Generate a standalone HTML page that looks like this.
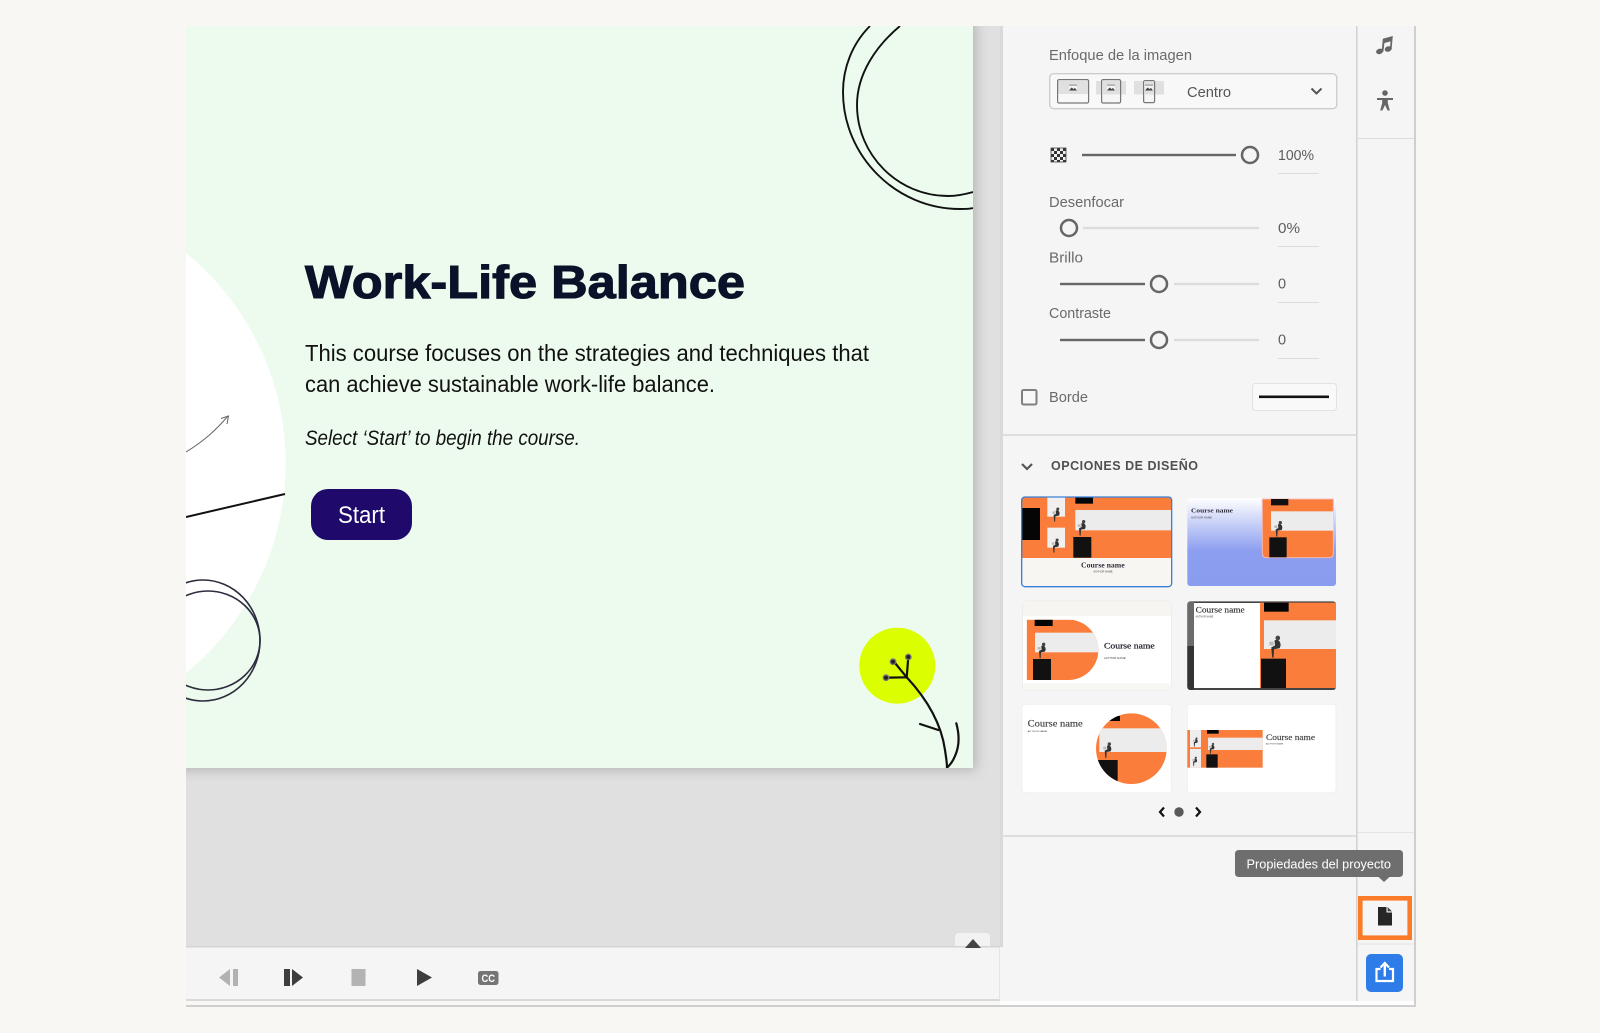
<!DOCTYPE html>
<html lang="es">
<head>
<meta charset="utf-8">
<title>Work-Life Balance</title>
<style>
html,body{margin:0;padding:0;background:#f8f7f3;width:1600px;height:1033px;overflow:hidden}
svg{display:block}
text{font-family:"Liberation Sans",sans-serif}
.l{font-size:15px;fill:#6a6a6a}
.v{font-size:14.5px;fill:#5c5c5c}
.s{font-family:"Liberation Serif",serif;font-weight:bold;fill:#2c2c3a}
.a{font-size:5px;fill:#444}
</style>
</head>
<body>
<svg width="1600" height="1033" viewBox="0 0 1600 1033" xmlns="http://www.w3.org/2000/svg">
<defs>
<clipPath id="slide"><rect x="186" y="26" width="787" height="742"/></clipPath>
<clipPath id="stage"><rect x="186" y="26" width="814" height="921"/></clipPath>
<filter id="blur" x="-10%" y="-10%" width="120%" height="120%"><feGaussianBlur stdDeviation="6"/></filter>
<linearGradient id="g2" x1="0" x2="0" y1="0" y2="1"><stop offset="0" stop-color="#ffffff"/><stop offset=".6" stop-color="#8c9ef0"/><stop offset="1" stop-color="#8a9cee"/></linearGradient>
<pattern id="chk" width="6" height="6" patternUnits="userSpaceOnUse" x="1051" y="148"><rect width="6" height="6" fill="#f0f0f0"/><rect width="3" height="3" fill="#333"/><rect x="3" y="3" width="3" height="3" fill="#333"/></pattern>
<clipPath id="t3c"><path d="M50 389H175C225 389 265 430 265 480C265 530 225 570 175 570H50Z"/></clipPath>
<clipPath id="t5c"><circle cx="364" cy="176" r="106"/></clipPath>
<g id="p"><circle cx="6" cy="-20" r="5" fill="#444"/><path d="M-1 -15C6 -18 12 -14 12 -4L10 2L-2 4L-3 22H-6L-8 0L0 -4Z" fill="#333"/><rect x="-12" y="-12" width="9" height="8" fill="#bbb"/></g>
<g id="img"><rect x="-4" y="-3.5" width="8" height="6" fill="#f4f4f4"/><path d="M-4 2.5L-1.5 -.5L.5 1L2 0L4 2.5Z" fill="#444"/><rect x="-4" y="-3.5" width="8" height="1.2" fill="#999"/></g>
</defs>

<!-- page frame -->
<rect x="186" y="26" width="1228" height="975" fill="#f5f5f5"/>
<rect x="186" y="1001" width="814" height="4" fill="#f8f7f3"/>
<rect x="1000" y="1001" width="414" height="4" fill="#fff"/>
<rect x="186" y="1005" width="1229" height="2" fill="#cfcfcf"/>
<rect x="1414" y="26" width="2" height="981" fill="#cfcfcf"/>

<!-- stage -->
<rect x="186" y="26" width="814" height="921" fill="#e0e0e0"/>
<g clip-path="url(#stage)"><rect x="176" y="20" width="800" height="750" fill="#b4b4b4" filter="url(#blur)"/></g>
<rect x="1000" y="26" width="3" height="921" fill="#d9d9d9"/>

<!-- slide -->
<rect x="186" y="26" width="787" height="742" fill="#edfbee"/>
<g clip-path="url(#slide)">
<circle cx="14.7" cy="463" r="271" fill="#fff"/>
<path d="M870 26C852 44 843 68 843 92C843 156 896 209 960 209C965 209 970 209 973 208" fill="none" stroke="#111" stroke-width="1.9"/>
<path d="M900 26C876 46 857 74 857 105C857 155 898 196 948 196C957 196 966 194 973 192" fill="none" stroke="#111" stroke-width="1.9"/>
<path d="M186 452C204 441 216 430 228 416" fill="none" stroke="#666" stroke-width="1"/>
<path d="M221 418.5L228.5 416L227 424" fill="none" stroke="#666" stroke-width="1"/>
<path d="M186 517L285 494" fill="none" stroke="#111" stroke-width="2"/>
<ellipse cx="203" cy="640.5" rx="57" ry="60.5" fill="none" stroke="#2c2c3e" stroke-width="1.6"/>
<ellipse cx="208" cy="640.5" rx="52" ry="49.5" fill="none" stroke="#2c2c3e" stroke-width="1.6"/>
<circle cx="897.3" cy="665.7" r="38" fill="#dcff00"/>
<g fill="none" stroke="#111" stroke-width="2.2" stroke-linecap="round">
<path d="M895 663L906.7 677.3C925 697 941 722 945 750C946 757 947 762 947 767.7"/>
<path d="M908.3 657L906.7 677.3"/>
<path d="M886 677.7L906.7 677.3"/>
<path d="M920 724L938.3 730"/>
<path d="M956.3 723.3C959 733 960 745 955 756C953 761 950 765 947 767.7"/>
</g>
<g fill="#222" stroke="#777" stroke-width="1.4">
<circle cx="893" cy="661.7" r="2.7"/><circle cx="908.3" cy="657" r="2.7"/><circle cx="886" cy="677.7" r="2.7"/>
</g>
</g>
<text x="305" y="298" font-size="46" font-weight="bold" fill="#0a1128" stroke="#0a1128" stroke-width="1.1" textLength="440" lengthAdjust="spacingAndGlyphs">Work-Life Balance</text>
<text x="305" y="361" font-size="23" fill="#111" textLength="564" lengthAdjust="spacingAndGlyphs">This course focuses on the strategies and techniques that</text>
<text x="305" y="392" font-size="23" fill="#111" textLength="410" lengthAdjust="spacingAndGlyphs">can achieve sustainable work-life balance.</text>
<text x="305" y="445" font-size="21" font-style="italic" fill="#111" textLength="275" lengthAdjust="spacingAndGlyphs">Select ‘Start’ to begin the course.</text>
<rect x="311" y="489" width="101" height="51" rx="17" fill="#1f0a6c"/>
<text x="338" y="523" font-size="24" fill="#fff" textLength="47" lengthAdjust="spacingAndGlyphs">Start</text>

<!-- control bar -->
<path d="M955 947V937Q955 933 959 933H986Q990 933 990 937V947Z" fill="#f2f2f2"/>
<rect x="186" y="947" width="813" height="52" fill="#f5f5f5"/>
<rect x="186" y="946" width="814" height="1.5" fill="#d4d4d4"/>
<rect x="186" y="999" width="814" height="2" fill="#d9d9d9"/>
<rect x="999" y="947" width="1" height="53" fill="#e4e4e4"/>
<path d="M965 948L973 939L981 948Z" fill="#444"/>
<path d="M230 969V986L219 977.5Z" fill="#b2b2b2"/><rect x="233" y="969" width="5" height="17" fill="#b2b2b2"/>
<rect x="284" y="969" width="6" height="17" fill="#3e3e3e"/><path d="M292 969L303 977.5L292 986Z" fill="#3e3e3e"/>
<rect x="351.5" y="969" width="14" height="17" fill="#b3b3b3"/>
<path d="M417 969L432 977.5L417 986Z" fill="#3e3e3e"/>
<rect x="478" y="971" width="20.5" height="14" rx="2.5" fill="#757575"/>
<text x="481.5" y="982" font-size="11" font-weight="bold" fill="#fff" textLength="13.5" lengthAdjust="spacingAndGlyphs">CC</text>

<!-- panel -->
<rect x="1003" y="26" width="354" height="975" fill="#f5f5f5"/>
<rect x="1356" y="26" width="1.6" height="975" fill="#d2d2d2"/>
<text class="l" x="1049" y="60" textLength="143" lengthAdjust="spacingAndGlyphs">Enfoque de la imagen</text>
<rect x="1049.7" y="73.7" width="287" height="35" rx="4" fill="#f8f8f8" stroke="#cdcdcd" stroke-width="1.4"/>
<rect x="1057" y="81" width="32" height="13" fill="#e0e0e0"/>
<rect x="1057.6" y="79.6" width="31" height="23.4" rx="1.5" fill="none" stroke="#777" stroke-width="1.2"/>
<use href="#img" x="1073" y="88"/>
<rect x="1096" y="81" width="30" height="13.5" fill="#e0e0e0"/>
<rect x="1101.6" y="79.6" width="19" height="23.4" rx="1.5" fill="#f6f6f6" stroke="#777" stroke-width="1.2"/>
<rect x="1102.2" y="81" width="17.8" height="13.5" fill="#e0e0e0"/>
<use href="#img" x="1111" y="88"/>
<rect x="1134" y="81" width="30" height="13.5" fill="#e0e0e0"/>
<rect x="1143.6" y="80.6" width="11" height="22" rx="1.5" fill="#f6f6f6" stroke="#777" stroke-width="1.2"/>
<rect x="1144.2" y="81.2" width="9.8" height="13.3" fill="#e0e0e0"/>
<use href="#img" x="1149" y="88"/>
<text x="1187" y="97" font-size="15" fill="#555" textLength="44" lengthAdjust="spacingAndGlyphs">Centro</text>
<path d="M1311.5 88.5L1316.5 93.5L1321.5 88.5" fill="none" stroke="#555" stroke-width="2"/>

<rect x="1051" y="148" width="15" height="14" fill="url(#chk)" stroke="#444" stroke-width=".8"/>
<rect x="1082" y="153.8" width="154" height="2.4" fill="#666"/>
<circle cx="1250" cy="155" r="8" fill="#f5f5f5" stroke="#666" stroke-width="2.5"/>
<text class="v" x="1278" y="160" textLength="36" lengthAdjust="spacingAndGlyphs">100%</text>
<rect x="1278" y="173" width="41" height="1" fill="#dcdcdc"/>

<text class="l" x="1049" y="207" textLength="75" lengthAdjust="spacingAndGlyphs">Desenfocar</text>
<rect x="1083" y="226.8" width="176" height="2.4" fill="#dcdcdc"/>
<circle cx="1069" cy="228" r="8" fill="#f5f5f5" stroke="#666" stroke-width="2.5"/>
<text class="v" x="1278" y="233" textLength="22" lengthAdjust="spacingAndGlyphs">0%</text>
<rect x="1278" y="246" width="41" height="1" fill="#dcdcdc"/>

<text class="l" x="1049" y="262.5" textLength="34" lengthAdjust="spacingAndGlyphs">Brillo</text>
<rect x="1060" y="282.8" width="85" height="2.4" fill="#666"/>
<rect x="1174" y="282.8" width="85" height="2.4" fill="#dcdcdc"/>
<circle cx="1159" cy="284" r="8" fill="#f5f5f5" stroke="#666" stroke-width="2.5"/>
<text class="v" x="1278" y="288.5">0</text>
<rect x="1278" y="302" width="41" height="1" fill="#dcdcdc"/>

<text class="l" x="1049" y="318" textLength="62" lengthAdjust="spacingAndGlyphs">Contraste</text>
<rect x="1060" y="338.8" width="85" height="2.4" fill="#666"/>
<rect x="1174" y="338.8" width="85" height="2.4" fill="#dcdcdc"/>
<circle cx="1159" cy="340" r="8" fill="#f5f5f5" stroke="#666" stroke-width="2.5"/>
<text class="v" x="1278" y="344.5">0</text>
<rect x="1278" y="358" width="41" height="1" fill="#dcdcdc"/>

<rect x="1022" y="390" width="14.5" height="14.5" rx="1.5" fill="#f8f8f8" stroke="#808080" stroke-width="2"/>
<text class="l" x="1049" y="402" textLength="39" lengthAdjust="spacingAndGlyphs">Borde</text>
<rect x="1252.5" y="383.5" width="84" height="27" rx="3" fill="#f9f9f9" stroke="#e2e2e2"/>
<rect x="1259" y="395.5" width="70" height="2.6" fill="#111"/>
<rect x="1003" y="434" width="353" height="2" fill="#dedede"/>

<path d="M1022 464L1027 469L1032 464" fill="none" stroke="#555" stroke-width="2.2"/>
<text x="1051" y="470" font-size="12.5" font-weight="bold" fill="#505050" textLength="147" lengthAdjust="spacing">OPCIONES DE DISEÑO</text>

<!-- thumbnails 1-4 -->
<g transform="translate(1010 490) scale(.33333)">
  <rect x="35" y="21" width="450" height="269" rx="10" fill="#f8f6f2"/>
  <path d="M36 22H484V204H36Z" fill="#fb7d3c"/>
  <rect x="112" y="22" width="53" height="58" fill="#f1f0ee"/>
  <rect x="112" y="113" width="53" height="60" fill="#f1f0ee"/>
  <rect x="196" y="60" width="288" height="61" fill="#ececec"/>
  <rect x="196" y="22" width="53" height="19" fill="#050505"/>
  <rect x="36" y="54" width="54" height="96" fill="#050505"/>
  <rect x="190" y="141" width="54" height="62" fill="#111"/>
  <use href="#p" x="215" y="115"/>
  <use href="#p" transform="translate(138 75) scale(.9)"/>
  <use href="#p" transform="translate(136 168) scale(.9)"/>
  <rect x="35" y="21" width="450" height="269" rx="10" fill="none" stroke="#3a80d8" stroke-width="4"/>
  <text class="s" x="213" y="233" font-size="21" textLength="131" lengthAdjust="spacingAndGlyphs">Course name</text>
  <text class="a" x="250" y="248" textLength="58" lengthAdjust="spacingAndGlyphs" style="font-size:7px">AUTHOR NAME</text>

  <rect x="532" y="24" width="446" height="264" rx="9" fill="url(#g2)"/>
  <path d="M757 27H970V190Q970 203 957 203H770Q757 203 757 190Z" fill="#fb7d3c" stroke="#f3b9b5" stroke-width="3"/>
  <rect x="783" y="64" width="187" height="58" fill="#ececec"/>
  <rect x="783" y="27" width="52" height="19" fill="#111"/>
  <rect x="778" y="142" width="52" height="60" fill="#111"/>
  <use href="#p" x="805" y="118"/>
  <text class="s" x="543" y="68" font-size="20" textLength="126" lengthAdjust="spacingAndGlyphs">Course name</text>
  <text class="a" x="543" y="86" style="font-size:7px" textLength="63" lengthAdjust="spacingAndGlyphs">AUTHOR NAME</text>

  <rect x="38" y="333" width="446" height="267" rx="9" fill="#fff" stroke="#e9e9e9" stroke-width="2"/>
  <rect x="39" y="334" width="444" height="44" fill="#f7f5f1"/>
  <rect x="39" y="580" width="444" height="19" fill="#f8f7f3"/>
  <g clip-path="url(#t3c)">
    <rect x="50" y="389" width="220" height="185" fill="#fb7d3c"/>
    <rect x="75" y="428" width="195" height="59" fill="#ececec"/>
    <rect x="74" y="389" width="54" height="19" fill="#050505"/>
    <rect x="69" y="507" width="54" height="63" fill="#111"/>
    <use href="#p" x="95" y="483"/>
  </g>
  <text x="282" y="476" font-size="26" style="font-family:'Liberation Serif',serif" fill="#222230" stroke="#222230" stroke-width=".7" textLength="152" lengthAdjust="spacingAndGlyphs">Course name</text>
  <text class="a" x="282" y="507" style="font-size:7px" textLength="65" lengthAdjust="spacingAndGlyphs">AUTHOR NAME</text>

  <rect x="532" y="334" width="446" height="266" rx="9" fill="#444"/>
  <path d="M532 468V344Q532 334 542 334H552V468Z" fill="#6b6b6b"/>
  <path d="M532 468H552V600H542Q532 600 532 590Z" fill="#333"/>
  <rect x="552" y="339" width="198" height="255" fill="#fff"/>
  <path d="M750 338H978V594H750Z" fill="#fb7d3c"/>
  <rect x="762" y="391" width="216" height="86" fill="#ececec"/>
  <rect x="762" y="338" width="74" height="27" fill="#050505"/>
  <rect x="753" y="506" width="75" height="88" fill="#111"/>
  <use href="#p" transform="translate(795 472) scale(1.4)"/>
  <text x="557" y="367" font-size="25" style="font-family:'Liberation Serif',serif" fill="#333" stroke="#333" stroke-width=".5" textLength="147" lengthAdjust="spacingAndGlyphs">Course name</text>
  <text class="a" x="557" y="382" style="font-size:7px" textLength="53" lengthAdjust="spacingAndGlyphs">AUTHOR NAME</text>
</g>

<!-- thumbnails 5-6 -->
<g transform="translate(1010 690) scale(.33333)">
  <rect x="36" y="43" width="448" height="265" rx="9" fill="#fff" stroke="#ececec" stroke-width="2"/>
  <g clip-path="url(#t5c)">
    <rect x="250" y="60" width="230" height="230" fill="#fb7d3c"/>
    <rect x="268" y="115" width="210" height="71" fill="#ececec"/>
    <rect x="298" y="78" width="32" height="15" fill="#050505"/>
    <rect x="258" y="210" width="65" height="70" fill="#111"/>
    <use href="#p" x="292" y="182"/>
  </g>
  <text x="53" y="110" font-size="27" style="font-family:'Liberation Serif',serif" fill="#444" stroke="#444" stroke-width=".5" textLength="165" lengthAdjust="spacingAndGlyphs">Course name</text>
  <text class="a" x="53" y="126" style="font-size:6px" textLength="59" lengthAdjust="spacingAndGlyphs">AUTHOR NAME</text>

  <rect x="532" y="43" width="446" height="265" rx="9" fill="#fff" stroke="#ececec" stroke-width="2"/>
  <rect x="532" y="120" width="226" height="113" fill="#fb7d3c"/>
  <rect x="540" y="120" width="33" height="52" fill="#eee"/>
  <rect x="540" y="177" width="33" height="56" fill="#eee"/>
  <rect x="594" y="143" width="164" height="37" fill="#ececec"/>
  <rect x="591" y="120" width="35" height="11" fill="#050505"/>
  <rect x="589" y="193" width="34" height="40" fill="#111"/>
  <use href="#p" transform="translate(605 176) scale(.7)"/>
  <use href="#p" transform="translate(556 157) scale(.6)"/>
  <use href="#p" transform="translate(554 215) scale(.6)"/>
  <text x="768" y="150" font-size="24" style="font-family:'Liberation Serif',serif" fill="#444" stroke="#444" stroke-width=".5" textLength="147" lengthAdjust="spacingAndGlyphs">Course name</text>
  <text class="a" x="768" y="163" style="font-size:6px" textLength="52" lengthAdjust="spacingAndGlyphs">AUTHOR NAME</text>
</g>

<path d="M1164 807.5L1160 812L1164 816.5" fill="none" stroke="#111" stroke-width="2.2"/>
<circle cx="1179" cy="812" r="4.7" fill="#595959"/>
<path d="M1196 807.5L1200 812L1196 816.5" fill="none" stroke="#111" stroke-width="2.2"/>
<rect x="1003" y="835" width="353" height="2" fill="#dedede"/>

<!-- rail -->
<rect x="1357.6" y="26" width="56.4" height="975" fill="#f5f5f5"/>
<path d="M1382.8 38.8L1392.8 36L1391.6 49H1389.8L1390.6 41.4L1384.4 43L1383.4 51.5H1381.7Z" fill="#666"/>
<ellipse cx="1379.6" cy="51.4" rx="3.6" ry="2.7" fill="#666" transform="rotate(-18 1379.6 51.4)"/>
<ellipse cx="1388.2" cy="49" rx="3.6" ry="2.7" fill="#666" transform="rotate(-18 1388.2 49)"/>
<circle cx="1385" cy="93" r="2.8" fill="#666"/>
<path d="M1377 98H1393V100H1387.8V103L1389.8 110.5H1387.6L1385 105L1382.4 110.5H1380.2L1382.2 103V100H1377Z" fill="#666"/>
<rect x="1357.6" y="138" width="56.4" height="1" fill="#dcdcdc"/>
<rect x="1357.6" y="832" width="56.4" height="1" fill="#e4e4e4"/>
<rect x="1357.6" y="943.5" width="56.4" height="1" fill="#e4e4e4"/>

<!-- tooltip -->
<path d="M1239 850H1399Q1403 850 1403 854V873Q1403 877 1399 877H1389.5L1384 882L1378.5 877H1239Q1235 877 1235 873V854Q1235 850 1239 850Z" fill="#6e6e6e"/>
<text x="1246.5" y="868.5" font-size="13" fill="#fff" textLength="144.5" lengthAdjust="spacingAndGlyphs">Propiedades del proyecto</text>

<!-- properties button -->
<rect x="1360.3" y="898.3" width="49.4" height="39.4" fill="none" stroke="#fb7c28" stroke-width="4.6"/>
<path d="M1378 907H1386.5V912.5H1392V925.5H1378Z" fill="#262626"/>
<path d="M1387.6 907L1392 911.4H1387.6Z" fill="#444"/>

<!-- share -->
<rect x="1366" y="954" width="37" height="38" rx="5" fill="#2d7ce8"/>
<path d="M1380.5 969H1376.5V981H1393V969H1389" fill="none" stroke="#fff" stroke-width="2.2"/>
<path d="M1384.8 976.5V964" fill="none" stroke="#fff" stroke-width="2.4"/>
<path d="M1380.5 967.5L1384.8 963L1389 967.5" fill="none" stroke="#fff" stroke-width="2.2"/>
</svg>
</body>
</html>
